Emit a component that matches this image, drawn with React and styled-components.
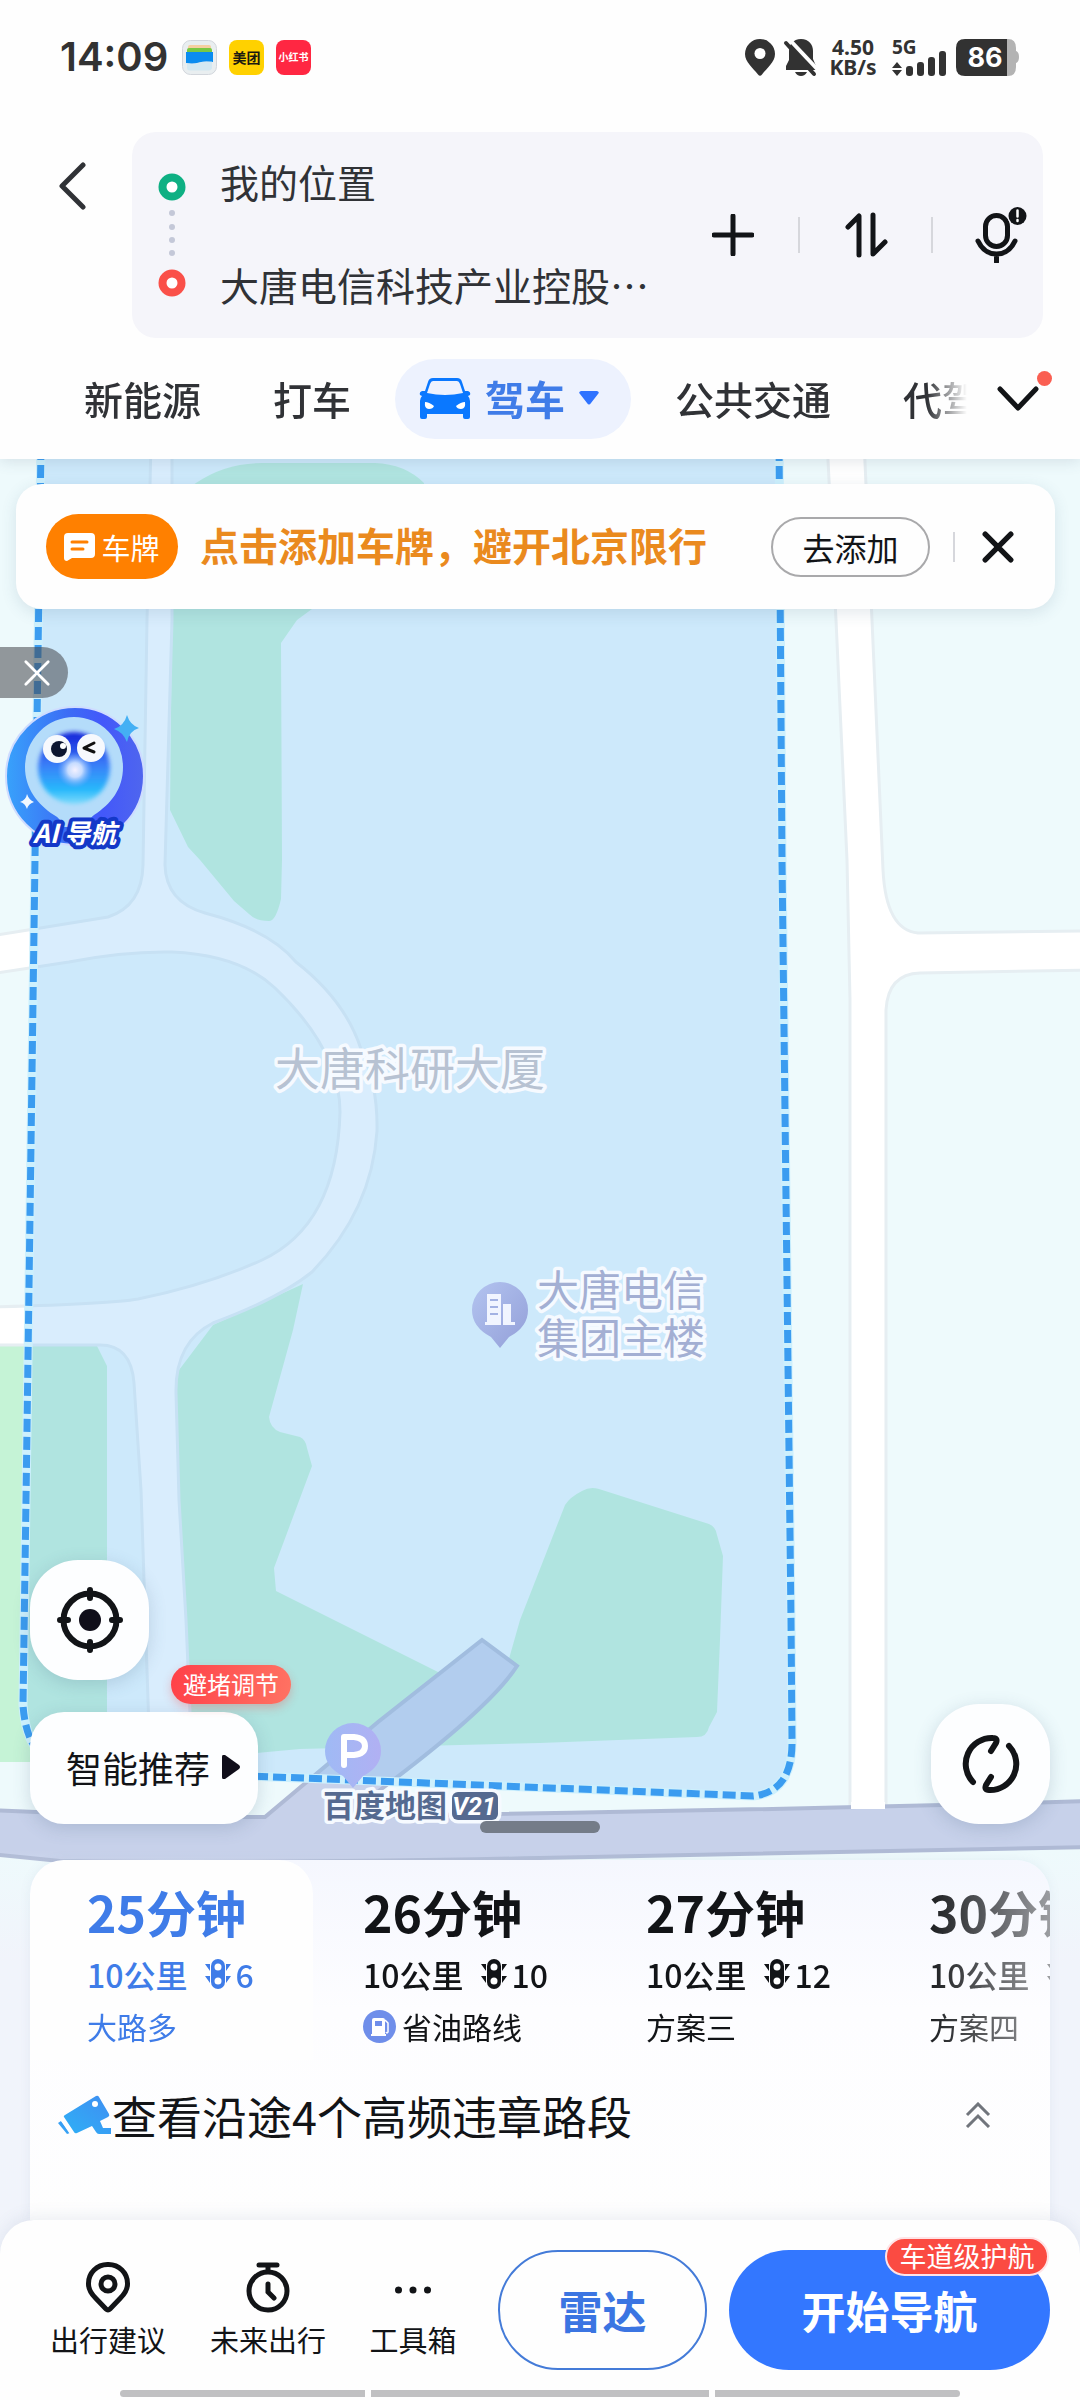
import React from "react";
import styled, { createGlobalStyle, css } from "styled-components";

const colors = {
  ink: "#121417",
  text: "#303236",
  blue: "#3377ff",
  blueText: "#3f7ce8",
  orange: "#ff8000",
  red: "#fb4b42",
  field: "#f5f5fa",
};

const GlobalStyle = createGlobalStyle`
  * {
    box-sizing: border-box;
  }

  body {
    margin: 0;
    background-color: #f1f4fb;
    font-family: "Noto Sans CJK SC", sans-serif;
    color: ${colors.ink};
  }

  button,
  input {
    font-family: inherit;
    color: inherit;
    margin: 0;
    padding: 0;
    border: none;
    background: none;
  }

  button {
    cursor: pointer;
    white-space: nowrap;
  }

  svg {
    display: block;
    flex: none;
  }
`;

const Page = styled.div`
  display: flex;
  flex-direction: column;
  min-height: 100vh;
  overflow: hidden;
`;

/* ---------- header ---------- */

const Header = styled.header`
  position: relative;
  z-index: 1;
  background-color: #fefefe;
  box-shadow: 0 2px 14px rgba(70, 90, 110, 0.16);
`;

const StatusBar = styled.div`
  display: flex;
  align-items: center;
  height: 114px;
  padding: 0 60px;
  color: #323232;
`;

const Clock = styled.div`
  width: 106px;
  margin-right: 16px;
  font-family: Inter, "Noto Sans", sans-serif;
  font-size: 40px;
  font-weight: 600;
  line-height: 48px;
  white-space: nowrap;
`;

const AppIcons = styled.div`
  display: flex;
  gap: 12px;
`;

const AppIcon = styled.div`
  display: flex;
  align-items: center;
  justify-content: center;
  width: 35px;
  height: 35px;
  border-radius: 8px;
  background-color: ${(props) => props.$bg};
  color: ${(props) => props.$color};
  font-size: ${(props) => props.$size}px;
  font-weight: 700;
  line-height: 1;
  white-space: nowrap;
`;

const StatusIcons = styled.div`
  display: flex;
  align-items: center;
  margin-left: auto;

  svg {
    overflow: visible;
  }
`;

const NetSpeed = styled.div`
  display: flex;
  flex-direction: column;
  width: 50px;
  margin: 0 14px 0 10px;
  font-family: "Noto Sans", sans-serif;
  font-size: 21px;
  font-weight: 700;
  line-height: 20px;
  text-align: center;
`;

const SearchRow = styled.div`
  display: grid;
  grid-template-columns: 132px 1fr;
  padding: 18px 37px 0 0;
`;

const BackButton = styled.button`
  display: flex;
  align-items: center;
  height: 108px;
  padding-left: 58px;
`;

const SearchCard = styled.div`
  display: flex;
  align-items: center;
  padding-left: 26px;
  border-radius: 24px;
  background-color: ${colors.field};
`;

const Fields = styled.div`
  display: flex;
  flex: 1;
  flex-direction: column;
  min-width: 0;
  margin-left: 34px;
`;

const Field = styled.input`
  width: 100%;
  height: 102px;
  padding-bottom: 5px;
  font-size: 39px;
  color: ${colors.text};
  outline: none;
  text-overflow: ellipsis;

  &:last-child {
    height: 104px;
  }
`;

const Actions = styled.div`
  display: flex;
  align-items: center;
`;

const Action = styled.button`
  display: flex;
  align-items: center;
  justify-content: ${(props) => (props.$last ? "flex-end" : "center")};
  width: ${(props) => (props.$last ? 110 : 131)}px;
  height: 80px;
  padding-right: ${(props) => (props.$last ? 16 : 0)}px;
`;

const Divider = styled.span`
  flex: none;
  width: 2px;
  height: ${(props) => props.$height}px;
  background-color: #d6d7dc;
`;

const TabRow = styled.div`
  display: flex;
  align-items: center;
  height: 121px;
  padding: 0 28px 0 48px;
`;

const Tabs = styled.nav`
  display: flex;
  flex: 1;
  align-items: center;
  min-width: 0;
  overflow: hidden;
  mask-image: linear-gradient(
    to right,
    #000 calc(100% - 40px),
    transparent 100%
  );
`;

const Tab = styled.button`
  display: flex;
  flex: none;
  align-items: center;
  height: 80px;
  padding: 0 36px 2px;
  font-size: 39px;
  font-weight: 500;
  color: ${colors.text};

  ${(props) =>
    props.$active &&
    css`
      gap: 14px;
      margin: 0 8px;
      padding: 0 32px 2px 24px;
      border-radius: 40px;
      background-color: #edf2fe;
      font-size: 40px;
      font-weight: 700;
      color: ${colors.blueText};
    `}
`;

const MoreTabs = styled.button`
  position: relative;
  display: flex;
  align-items: center;
  justify-content: center;
  width: 85px;
  height: 80px;
  padding-left: 16px;
`;

const RedDot = styled.span`
  position: absolute;
  top: 12px;
  right: 0;
  width: 15px;
  height: 15px;
  border-radius: 50%;
  background-color: #fa5f52;
`;

/* ---------- map ---------- */

const MapArea = styled.main`
  position: relative;
  display: flex;
  flex: 1;
  flex-direction: column;
  padding-top: 25px;
`;

const MapSvg = styled.svg`
  position: absolute;
  top: 0;
  left: 0;
  width: 100%;
  height: 100%;
`;

const Banner = styled.section`
  position: relative;
  display: flex;
  align-items: center;
  height: 125px;
  margin: 0 25px 0 16px;
  padding: 0 30px;
  border-radius: 26px;
  background-color: #fefefe;
  box-shadow: 0 4px 16px rgba(60, 90, 120, 0.14);
`;

const PlateTag = styled.span`
  display: flex;
  flex: none;
  align-items: center;
  justify-content: center;
  gap: 6px;
  width: 132px;
  height: 65px;
  border-radius: 33px;
  background-color: ${colors.orange};
  color: #fff;
  font-size: 29px;
`;

const BannerText = styled.p`
  flex: 1;
  margin: 0 0 0 22px;
  padding-bottom: 6px;
  font-size: 39px;
  font-weight: 700;
  color: #ea8a1e;
  white-space: nowrap;
`;

const AddButton = styled.button`
  width: 159px;
  height: 60px;
  margin-right: 23px;
  border: 2px solid #a9a9ab;
  border-radius: 30px;
  font-size: 32px;
  line-height: 54px;
`;

const CloseBanner = styled.button`
  display: flex;
  align-items: center;
  justify-content: flex-end;
  width: 70px;
  height: 60px;
  padding-right: 11px;
`;

const AiPanel = styled.div`
  position: relative;
  display: flex;
  flex-direction: column;
  align-items: flex-start;
  margin-top: 38px;
`;

const AiClose = styled.button`
  display: flex;
  align-items: center;
  justify-content: center;
  width: 68px;
  height: 51px;
  padding-left: 6px;
  border-radius: 0 26px 26px 0;
  background-color: rgba(70, 70, 74, 0.55);
`;

const Controls = styled.div`
  position: relative;
  display: flex;
  align-items: flex-end;
  justify-content: space-between;
  margin-top: auto;
  padding: 0 30px;
`;

const LeftControls = styled.div`
  display: flex;
  flex-direction: column;
  gap: 32px;
`;

const floating = css`
  display: flex;
  align-items: center;
  justify-content: center;
  background-color: #fdfeff;
  box-shadow: 0 4px 18px rgba(60, 90, 120, 0.2);
`;

const RoundButton = styled.button`
  ${floating}
  width: 119px;
  height: 120px;
  border-radius: 48px;
`;

const SmartButton = styled.button`
  ${floating}
  position: relative;
  gap: 12px;
  width: 228px;
  height: 112px;
  padding: 0 0 2px 18px;
  border-radius: 34px;
  font-size: 36px;
`;

const JamBadge = styled.span`
  position: absolute;
  top: -47px;
  left: 141px;
  width: 120px;
  height: 39px;
  border-radius: 20px;
  background: linear-gradient(100deg, #ff4048, #ff7363);
  box-shadow: 0 4px 10px rgba(240, 70, 70, 0.3);
  color: #fff;
  font-size: 24px;
  line-height: 38px;
  text-align: center;
`;

/* ---------- route sheet ---------- */

const Sheet = styled.section`
  position: relative;
  height: 360px;
  margin: 36px 30px 0;
  border-radius: 34px 34px 0 0;
  background: linear-gradient(#f5f7fe, #fdfdff 150px, #fefefe);
  box-shadow: 0 0 12px rgba(90, 110, 150, 0.08);
`;

const Handle = styled.span`
  position: absolute;
  top: -39px;
  left: 50%;
  width: 120px;
  height: 12px;
  margin-left: -60px;
  border-radius: 6px;
  background-color: #747c88;
`;

const Routes = styled.div`
  display: flex;
  overflow: hidden;
  border-radius: 34px 34px 0 0;
  mask-image: linear-gradient(
    to right,
    #000 calc(100% - 130px),
    rgba(0, 0, 0, 0.4) 100%
  );
`;

const Route = styled.button`
  display: flex;
  flex: none;
  flex-direction: column;
  width: 283px;
  height: 200px;
  padding: 18px 0 0 50px;
  text-align: left;

  ${(props) =>
    props.$active &&
    css`
      padding-left: 57px;
      border-radius: 34px 34px 0 0;
      background-color: #fefefe;
      color: ${colors.blueText};
    `}
`;

const RouteTime = styled.span`
  font-size: 50px;
  font-weight: 700;
  line-height: 66px;
`;

const RouteInfo = styled.span`
  display: flex;
  align-items: center;
  margin-top: 8px;
  font-size: 32px;
  font-weight: 500;
  line-height: 44px;

  svg {
    margin: 0 4px 0 18px;
  }
`;

const RouteNote = styled.span`
  display: flex;
  align-items: center;
  gap: 6px;
  margin-top: 10px;
  font-size: 30px;
  line-height: 40px;
`;

const Violations = styled.button`
  display: flex;
  align-items: center;
  width: 100%;
  height: 110px;
  padding: 0 59px 0 28px;
  font-size: 45px;

  svg:last-child {
    margin-left: auto;
  }
`;

/* ---------- bottom bar ---------- */

const BottomBar = styled.footer`
  position: relative;
  padding: 30px 30px 3px;
  border-radius: 34px 34px 0 0;
  background-color: #fefefe;
  box-shadow: 0 -4px 16px rgba(90, 110, 150, 0.1);
`;

const BarRow = styled.div`
  display: flex;
  height: 120px;
`;

const Tools = styled.div`
  display: flex;
  flex: 1;
`;

const Tool = styled.button`
  display: flex;
  flex-direction: column;
  align-items: center;
  width: ${(props) => props.$width}px;
  padding-top: 10px;
  font-size: 29px;
  line-height: 46px;
`;

const RadarButton = styled.button`
  width: 209px;
  margin-right: 22px;
  border: 2px solid #447bd8;
  border-radius: 60px;
  color: #3b75e2;
  font-size: 44px;
  font-weight: 700;
`;

const StartButton = styled.button`
  position: relative;
  width: 321px;
  border-radius: 60px;
  background-color: ${colors.blue};
  color: #fff;
  font-size: 44px;
  font-weight: 700;
`;

const LaneBadge = styled.span`
  position: absolute;
  top: -13px;
  right: 1px;
  width: 164px;
  height: 39px;
  border: 2px solid #ffe3e6;
  border-radius: 20px;
  background-color: ${colors.red};
  font-size: 27px;
  font-weight: 400;
  line-height: 33px;
  text-align: center;
`;

const HomeBar = styled.div`
  display: grid;
  grid-template-columns: 245fr 338fr 245fr;
  gap: 6px;
  margin: 20px 90px 0;

  span {
    height: 7px;
    background-color: #c0c0c2;
  }

  span:first-child {
    border-radius: 4px 0 0 4px;
  }

  span:last-child {
    border-radius: 0 4px 4px 0;
  }
`;

/* ---------- drawings ---------- */

const WalletLogo = () => (
  <svg width="35" height="35" viewBox="0 0 35 35">
    <rect x="0.5" y="0.5" width="34" height="34" rx="8" fill="#e9eef0" stroke="#d2d6dc" />
    <path d="M6 7q0-2 2-2h19q2 0 2 2v5H6z" fill="#f6cfa0" />
    <path d="M5 10q0-2 2-2h21q2 0 2 2v5H5z" fill="#78c843" />
    <path d="M4 12h27v10q-9-1-14 0.500t-13 0.500z" fill="#0a8cf0" />
    <path d="M5 24q8 0 13-1.500t12-1v7q-1 2-3 2H8q-3 0-3-3z" fill="#c9e6f2" opacity="0.7" />
  </svg>
);

const LocationOn = () => (
  <svg width="30" height="37" viewBox="0 0 30 37">
    <path
      d="M15 0a15 15 0 0 1 15 15c0 8-8 14-13 20.500q-2 2.500-4 0C8 29 0 23 0 15A15 15 0 0 1 15 0z"
      fill="currentColor"
    />
    <circle cx="15" cy="14.500" r="5.500" fill="#fff" />
  </svg>
);

const Muted = () => (
  <svg width="43" height="37" viewBox="-9 0 43 37">
    <path
      d="M17 0c8 0 12 6 12 12v8l3 7v4H2v-4l3-6v-9C5 6 9 0 17 0z"
      fill="currentColor"
    />
    <path d="M11 33h12q-2 4-6 4t-6-4z" fill="currentColor" />
    <path d="M4 -1L35 32" stroke="#fefefe" strokeWidth="4" />
    <path d="M2 4L30 35" stroke="currentColor" strokeWidth="4" strokeLinecap="round" />
  </svg>
);

const Signal = () => (
  <svg width="56" height="37" viewBox="0 0 56 37" fill="currentColor">
    <text x="0" y="15" fontSize="19" fontWeight="700" fontFamily="Noto Sans, sans-serif">
      5G
    </text>
    <path d="M5 23l5 6H0zM5 37l5-6H0z" />
    <rect x="14" y="27" width="7" height="10" rx="3" />
    <rect x="25" y="23" width="7" height="14" rx="3" />
    <rect x="36" y="18" width="7" height="19" rx="3" />
    <rect x="47" y="12" width="7" height="25" rx="3" />
  </svg>
);

const Battery = () => (
  <svg width="72" height="37" viewBox="-8 0 72 37">
    <path d="M48 0h4q8 0 8 9v3q3 1 3 6t-3 6v4q0 9-8 9h-4z" fill="#b3b3b3" />
    <path d="M9 0h42v37H9q-9 0-9-9V9q0-9 9-9z" fill="#323232" />
    <text
      x="29"
      y="28"
      fontSize="27"
      fontWeight="700"
      fontFamily="Inter, Noto Sans, sans-serif"
      textAnchor="middle"
      fill="#fff"
    >
      86
    </text>
  </svg>
);

const Back = () => (
  <svg width="28" height="48" viewBox="0 0 28 48">
    <path
      d="M25 3L4 24l21 21"
      fill="none"
      stroke={colors.text}
      strokeWidth="5"
      strokeLinecap="round"
      strokeLinejoin="round"
    />
  </svg>
);

const RouteMarks = () => (
  <svg width="28" height="124" viewBox="0 0 28 124">
    <circle cx="14" cy="14" r="9.500" fill="#fff" stroke="#0eb083" strokeWidth="8" />
    <g fill="#c4c8d8">
      <circle cx="14" cy="40" r="3" />
      <circle cx="14" cy="54" r="3" />
      <circle cx="14" cy="67" r="3" />
      <circle cx="14" cy="80" r="3" />
    </g>
    <circle cx="14" cy="110" r="9.500" fill="#fff" stroke="#fa5049" strokeWidth="8" />
  </svg>
);

const Plus = () => (
  <svg width="42" height="42" viewBox="0 0 42 42">
    <path d="M21 2v38M2 21h38" stroke={colors.ink} strokeWidth="5" strokeLinecap="round" />
  </svg>
);

const Swap = () => (
  <svg width="44" height="46" viewBox="0 0 44 46">
    <path
      d="M4 15L15 4v39M29 3v39l12-12"
      fill="none"
      stroke={colors.ink}
      strokeWidth="5"
      strokeLinecap="round"
      strokeLinejoin="round"
    />
  </svg>
);

const Mic = () => (
  <svg width="52" height="56" viewBox="0 0 52 56">
    <rect
      x="10.500"
      y="8.500"
      width="22"
      height="31"
      rx="11"
      fill="none"
      stroke={colors.ink}
      strokeWidth="5"
    />
    <path
      d="M3 34q6 13 18.500 13T40 34M21.500 47v8"
      fill="none"
      stroke={colors.ink}
      strokeWidth="5"
      strokeLinecap="round"
    />
    <circle cx="42.500" cy="9" r="10" fill={colors.field} />
    <circle cx="42.500" cy="9" r="9" fill={colors.ink} />
    <path d="M42.500 3.500v6M42.500 13v1" stroke="#fff" strokeWidth="2.500" strokeLinecap="round" />
  </svg>
);

const Car = () => (
  <svg width="52" height="42" viewBox="0 0 52 42">
    <path
      d="M14 1h24q4 0 5 4l3 9h3q3 1 2 4l-2 1q2 2 2 5v16q0 2-2 2h-3q-2 0-2-2v-3H8v3q0 2-2 2H3q-2 0-2-2V24q0-3 2-5l-2-1q-1-3 2-4h3l3-9q1-4 5-4z"
      fill="#0a78ff"
    />
    <path d="M14 4h24q2 0 3 3l3 9q-18 4-36 0l3-9q1-3 3-3z" fill="#edf2fe" />
    <path d="M6 25q4 0 9 4-1 3-5 3-5 0-4-7zM46 25q-4 0-9 4 1 3 5 3 5 0 4-7z" fill="#fff" />
  </svg>
);

const CaretDown = () => (
  <svg width="20" height="14" viewBox="0 0 20 14">
    <path d="M2 0h16q3 1 1 3l-7 9q-2 3-4 0L1 3q-2-2 1-3z" fill="#2f73ff" />
  </svg>
);

const ChevronDown = () => (
  <svg width="42" height="26" viewBox="0 0 42 26">
    <path
      d="M3 3l18 19L39 3"
      fill="none"
      stroke={colors.ink}
      strokeWidth="5"
      strokeLinecap="round"
      strokeLinejoin="round"
    />
  </svg>
);

const PlateIcon = () => (
  <svg width="31" height="28" viewBox="0 0 31 28">
    <path d="M4 0h23q4 0 4 4v17q0 4-4 4H8l-5 3q-3 0-3-3V4q0-4 4-4z" fill="#fff" />
    <path d="M8 9h15M8 16h11" stroke={colors.orange} strokeWidth="3" strokeLinecap="round" />
  </svg>
);

const Cross = ({ size, color, width }) => (
  <svg width={size} height={size} viewBox="0 0 30 30">
    <path
      d="M3 3l24 24M27 3L3 27"
      stroke={color}
      strokeWidth={width}
      strokeLinecap="round"
    />
  </svg>
);

const AiLogo = () => (
  <svg width="150" height="156" viewBox="0 0 150 156">
    <defs>
      <linearGradient id="aiRing" x1="0" y1="0.500" x2="1" y2="0.500">
        <stop offset="0" stopColor="#38a2fb" />
        <stop offset="0.450" stopColor="#3c6cf5" />
        <stop offset="0.700" stopColor="#4358fa" />
        <stop offset="1" stopColor="#4f66ee" />
      </linearGradient>
      <linearGradient id="aiFace" x1="0.500" y1="0" x2="0.500" y2="1">
        <stop offset="0" stopColor="#1420d8" />
        <stop offset="0.450" stopColor="#3b7df8" />
        <stop offset="0.800" stopColor="#27b8fb" />
        <stop offset="1" stopColor="#7fdcfb" />
      </linearGradient>
      <radialGradient id="aiNose">
        <stop offset="0" stopColor="#f4f1ff" />
        <stop offset="0.400" stopColor="#c6dcff" />
        <stop offset="1" stopColor="#6fa8ff" stopOpacity="0" />
      </radialGradient>
      <filter id="aiSoft" x="-20%" y="-20%" width="140%" height="140%">
        <feGaussianBlur stdDeviation="2" />
      </filter>
    </defs>
    <circle cx="75" cy="78" r="69" fill="url(#aiRing)" stroke="#cfdcff" strokeWidth="2" />
    <path
      d="M74 19a49 50 0 0 1 49 50c0 22-12 37-29 48q-6 4-3 12H62q0-8-8-12C37 106 25 90 25 69A49 50 0 0 1 74 19z"
      fill="#b4dcfa"
    />
    <circle cx="74" cy="70" r="36" fill="url(#aiFace)" filter="url(#aiSoft)" />
    <circle cx="75" cy="72" r="18" fill="url(#aiNose)" />
    <circle cx="57" cy="51" r="14" fill="#f7f9fd" />
    <circle cx="91" cy="50" r="14" fill="#f7f9fd" />
    <circle cx="59" cy="51" r="8" fill="#0c1530" />
    <circle cx="63" cy="48" r="3" fill="#fff" />
    <path
      d="M94 45l-10 5 10 4"
      fill="none"
      stroke="#111"
      strokeWidth="3"
      strokeLinecap="round"
      strokeLinejoin="round"
    />
    <path d="M127 17q3 10 12 13-10 3-12 14-4-10-13-13 10-3 13-14z" fill="#44b0f4" />
    <path d="M27 96q2 6 7 8-6 2-7 7-2-6-7-7 6-2 7-8z" fill="#f0f8ff" />
    <text
      x="33"
      y="145"
      fontSize="26"
      fontWeight="700"
      fontStyle="italic"
      fill="#fff"
      stroke="#1438c8"
      strokeWidth="8"
      strokeLinejoin="round"
      paintOrder="stroke"
    >
      AI 导航
    </text>
  </svg>
);

const Locate = () => (
  <svg width="66" height="66" viewBox="0 0 66 66">
    <g fill="none" stroke={colors.ink} strokeLinecap="round">
      <circle cx="33" cy="33" r="26.500" strokeWidth="6" />
      <path d="M33 3v8M33 55v8M3 33h8M55 33h8" strokeWidth="6" />
    </g>
    <circle cx="33" cy="33" r="11" fill="#100e1a" />
  </svg>
);

const Refresh = () => (
  <svg width="60" height="60" viewBox="0 0 60 60">
    <path
      d="M12 48A26 26 0 0 1 32 4q5 0 3 5l-5 8M48 12A26 26 0 0 1 28 56q-5 0-3-5l5-8"
      fill="none"
      stroke={colors.ink}
      strokeWidth="6"
      strokeLinecap="round"
      strokeLinejoin="round"
    />
  </svg>
);

const CaretRight = () => (
  <svg width="18" height="24" viewBox="0 0 18 24">
    <path d="M0 2q0-3 3-2l14 10q2 2 0 4L3 24q-3 1-3-2z" fill="#100e1a" />
  </svg>
);

const TrafficLight = () => (
  <svg width="26" height="30" viewBox="0 0 26 30">
    <g fill="currentColor">
      <rect x="6" y="0" width="14" height="30" rx="7" />
      <path d="M0 5h5v7zM0 17h5v7zM26 5h-5v7zM26 17h-5v7z" />
    </g>
    <g fill="#fff">
      <circle cx="13" cy="8" r="3.500" />
      <circle cx="13" cy="22" r="3.500" />
    </g>
  </svg>
);

const Fuel = () => (
  <svg width="33" height="33" viewBox="0 0 33 33">
    <circle cx="16.500" cy="16.500" r="16.500" fill="#6f8eea" />
    <path d="M11 8h9q2 0 2 2v14h1v2H8v-2h1V10q0-2 2-2z" fill="#fff" />
    <rect x="12" y="11" width="7" height="5" fill="#6f8eea" />
    <path d="M22 10l3 3v9q-1 2-2 0" fill="none" stroke="#fff" strokeWidth="1.500" />
  </svg>
);

const Camera = () => (
  <svg width="54" height="42" viewBox="0 0 54 42">
    <defs>
      <linearGradient id="cam" x1="0" y1="1" x2="1" y2="0">
        <stop offset="0" stopColor="#2fb0f6" />
        <stop offset="1" stopColor="#3f8ef2" />
      </linearGradient>
    </defs>
    <g fill="url(#cam)">
      <path d="M7 21L38 2q2-1 3 1l10 17q1 2-1 3l-8 4 3 7h8v6H41q-2 0-3-2l-4-6-15 7q-2 1-3-1L6 23q-1-1 1-2z" />
      <path d="M0 29l3-2 9 12-3 1z" />
    </g>
    <path d="M3 25l10 15" stroke="#fefefe" strokeWidth="2" />
    <circle cx="37" cy="10" r="3" fill="#fff" />
  </svg>
);

const DoubleUp = () => (
  <svg width="26" height="26" viewBox="0 0 26 26">
    <path
      d="M2 13L13 2l11 11M2 25l11-11 11 11"
      fill="none"
      stroke="#71757c"
      strokeWidth="3"
    />
  </svg>
);

const PinOutline = () => (
  <svg width="46" height="56" viewBox="0 0 46 56">
    <g fill="none" stroke={colors.ink} strokeWidth="5">
      <path d="M23 4.500a19 19 0 0 1 19.500 19.500c0 6-3 10-7 14L25 49q-2 2-4 0L10.500 38c-4-4-7-8-7-14A19 19 0 0 1 23 4.500z" />
      <circle cx="23" cy="24" r="7" />
    </g>
  </svg>
);

const Stopwatch = () => (
  <svg width="46" height="56" viewBox="0 0 46 56">
    <g fill="none" stroke={colors.ink} strokeWidth="5" strokeLinecap="round">
      <circle cx="23" cy="31" r="19" />
      <path d="M14 5h18M23 5v6" />
      <path d="M23 24v8l6 6" />
    </g>
  </svg>
);

const Dots = () => (
  <svg width="46" height="56" viewBox="0 0 46 56" fill={colors.ink}>
    <circle cx="8.500" cy="30" r="3.500" />
    <circle cx="23" cy="30" r="3.500" />
    <circle cx="37.500" cy="30" r="3.500" />
  </svg>
);

// Drawn on a 1080 wide sheet, cropped when the window has another ratio.
const CityMap = () => (
  <MapSvg viewBox="0 459 1080 1941" preserveAspectRatio="xMidYMin slice" aria-hidden="true">
    <defs>
      <linearGradient id="mapFade" x1="0" y1="0" x2="0" y2="1">
        <stop offset="0" stopColor="#f1f4fb" stopOpacity="0" />
        <stop offset="1" stopColor="#f1f4fb" />
      </linearGradient>
      <linearGradient id="poi" x1="0" y1="0" x2="1" y2="1">
        <stop offset="0" stopColor="#b3c4f0" />
        <stop offset="1" stopColor="#939fd8" />
      </linearGradient>
      <linearGradient id="park" x1="0" y1="0" x2="1" y2="0">
        <stop offset="0" stopColor="#9fbaf5" />
        <stop offset="1" stopColor="#b1b0f3" />
      </linearGradient>
    </defs>
    <rect y="459" width="1080" height="1941" fill="#eefafc" />

    <g fill="#c5f3d6">
      <path d="M172 620V500L196 483Q225 463 262 463H375Q405 464 424 483V560L312 609L297 620L281 643L282 860L281 899Q276 921 269 921Q256 921 249 914L234 901L200 860L188 847L170 810z" />
      <path d="M0 1346H97L107 1366V1762H0z" />
      <path d="M303 1284L293 1330L269 1417Q270 1428 280 1432L300 1437Q306 1440 307 1448L312 1466L274 1568L276 1591L444 1675L503 1680L520 1620L565 1505Q570 1497 582 1491Q590 1486 599 1489L709 1524Q716 1527 717 1535L723 1556L720 1640L717 1712L709 1727Q707 1737 697 1737L540 1743L300 1749L180 1760L176 1374L213 1325z" />
    </g>

    <g fill="#fff" stroke="#e6eef2" strokeWidth="3">
      <path d="M827 440L836 620L847 860L850 1000V1808H886V1010Q888 974 920 973L1090 970V931L918 933Q886 930 883 870L872 620L864 440z" />
      <path
        fillRule="evenodd"
        d="M151 440L147 620L143 865Q142 906 108 917L28 930L-10 936V974L69 962Q125 951 172 952Q240 955 275 988Q340 1050 340 1112Q337 1225 262 1260Q207 1285 138 1299Q110 1304 -10 1307V1345H100Q131 1345 134 1383L141 1490L150 1760H192L186 1620L179 1500L176 1393Q175 1342 213 1323Q280 1298 312 1272Q372 1210 377 1131Q378 1085 361 1049Q345 1000 296 962Q270 930 205 913Q166 902 165 865L172 620V440z"
      />
    </g>

    <path
      d="M-10 1810Q150 1817 265 1817L378 1722L482 1640L517 1666Q490 1708 380 1790L350 1816Q700 1812 1090 1801V1847L540 1858Q250 1864 60 1861L-10 1854z"
      fill="#c7d1ea"
      stroke="#afbad5"
      strokeWidth="4"
    />
    <path d="M851 1802h34v7h-34z" fill="#fff" />

    <path
      d="M41 440L35 860L26 1500L23 1705Q27 1766 75 1769L753 1796Q793 1792 792 1740L791 1620L782 860L779 440"
      fill="rgba(130, 197, 250, 0.3)"
    />
    <path
      d="M41 440L35 860L26 1500L23 1705Q27 1766 75 1769L753 1796Q793 1792 792 1740L791 1620L782 860L779 440"
      fill="none"
      stroke="#cdf0fd"
      strokeWidth="9"
    />
    <path
      d="M41 447L35 860L26 1500L23 1705Q27 1766 75 1769L753 1796Q793 1792 792 1740L791 1620L782 860L779 440"
      fill="none"
      stroke="#3b9cf0"
      strokeWidth="7"
      strokeDasharray="13 5"
    />

    <path
      d="M500 1282a28 28 0 0 1 28 28q0 17-19 27l-9 11-9-11q-19-10-19-27a28 28 0 0 1 28-28z"
      fill="url(#poi)"
    />
    <path d="M487 1294h14v31h-16v-3h2zM503 1304h8v18h4v3h-12z" fill="#f1f5ff" />
    <path d="M490 1300h8M490 1307h8M490 1314h8" stroke="#a3b2e3" strokeWidth="2" />

    <path
      d="M353 1723a28 28 0 0 1 28 28q0 16-18 25l-10 12-10-12q-18-9-18-25a28 28 0 0 1 28-28z"
      fill="url(#park)"
    />
    <path
      d="M344 1765V1737H354Q365 1738 365 1746T354 1755H346"
      fill="none"
      stroke="#fff"
      strokeWidth="6"
      strokeLinecap="round"
      strokeLinejoin="round"
    />

    <g stroke="#f6faff" strokeWidth="7" strokeLinejoin="round" paintOrder="stroke">
      <text x="275" y="1086" fontSize="45" fill="#b7c2d2">
        大唐科研大厦
      </text>
      <g fontSize="42" fill="#a3afd3">
        <text x="537" y="1306">
          大唐电信
        </text>
        <text x="537" y="1354">
          集团主楼
        </text>
      </g>
      <text x="323" y="1817" fontSize="31" fontWeight="700" fill="#556a90">
        百度地图
      </text>
      <rect x="452" y="1792" width="46" height="28" rx="6" fill="#556a90" />
    </g>
    <text
      x="474"
      y="1815"
      fontSize="25"
      fontWeight="700"
      fontStyle="italic"
      fontFamily="Roboto, sans-serif"
      textAnchor="middle"
      fill="#fff"
    >
      V21
    </text>

    <rect y="1850" width="1080" height="110" fill="url(#mapFade)" />
    <rect y="1960" width="1080" height="440" fill="#f1f4fb" />
  </MapSvg>
);

const routes = [
  { time: "25分钟", lights: 6, note: "大路多", active: true },
  { time: "26分钟", lights: 10, note: "省油路线", fuel: true },
  { time: "27分钟", lights: 12, note: "方案三" },
  { time: "30分钟", lights: 12, note: "方案四" },
];

const tools = [
  { label: "出行建议", icon: <PinOutline />, width: 156 },
  { label: "未来出行", icon: <Stopwatch />, width: 164 },
  { label: "工具箱", icon: <Dots />, width: 126 },
];

function App() {
  return (
    <Page>
      <GlobalStyle />
      <Header>
        <StatusBar>
          <Clock>14:09</Clock>
          <AppIcons>
            <WalletLogo />
            <AppIcon $bg="#ffd100" $color="#1c1a10" $size={14}>
              美团
            </AppIcon>
            <AppIcon $bg="#ff2742" $color="#fff" $size={10}>
              小红书
            </AppIcon>
          </AppIcons>
          <StatusIcons>
            <LocationOn />
            <Muted />
            <NetSpeed>
              <span>4.50</span>
              <span>KB/s</span>
            </NetSpeed>
            <Signal />
            <Battery />
          </StatusIcons>
        </StatusBar>

        <SearchRow>
          <BackButton aria-label="返回">
            <Back />
          </BackButton>
          <SearchCard>
            <RouteMarks />
            <Fields>
              <Field aria-label="起点" defaultValue="我的位置" />
              <Field aria-label="终点" defaultValue="大唐电信科技产业控股…" />
            </Fields>
            <Actions>
              <Action aria-label="添加途经点">
                <Plus />
              </Action>
              <Divider $height={36} />
              <Action aria-label="交换起终点">
                <Swap />
              </Action>
              <Divider $height={36} />
              <Action aria-label="语音输入" $last>
                <Mic />
              </Action>
            </Actions>
          </SearchCard>
        </SearchRow>

        <TabRow>
          <Tabs>
            <Tab>新能源</Tab>
            <Tab>打车</Tab>
            <Tab $active>
              <Car />
              驾车
              <CaretDown />
            </Tab>
            <Tab>公共交通</Tab>
            <Tab>代驾</Tab>
          </Tabs>
          <MoreTabs aria-label="更多出行方式">
            <ChevronDown />
            <RedDot />
          </MoreTabs>
        </TabRow>
      </Header>

      <MapArea>
        <CityMap />

        <Banner>
          <PlateTag>
            <PlateIcon />
            车牌
          </PlateTag>
          <BannerText>点击添加车牌，避开北京限行</BannerText>
          <AddButton>去添加</AddButton>
          <Divider $height={30} />
          <CloseBanner aria-label="关闭">
            <Cross size={32} color={colors.ink} width={5} />
          </CloseBanner>
        </Banner>

        <AiPanel>
          <AiClose aria-label="关闭">
            <Cross size={28} color="#fff" width={3} />
          </AiClose>
          <button aria-label="AI导航">
            <AiLogo />
          </button>
        </AiPanel>

        <Controls>
          <LeftControls>
            <RoundButton aria-label="定位">
              <Locate />
            </RoundButton>
            <SmartButton>
              智能推荐
              <CaretRight />
              <JamBadge>避堵调节</JamBadge>
            </SmartButton>
          </LeftControls>
          <RoundButton aria-label="刷新">
            <Refresh />
          </RoundButton>
        </Controls>

        <Sheet>
          <Handle />
          <Routes>
            {routes.map((route) => (
              <Route key={route.time} $active={route.active}>
                <RouteTime>{route.time}</RouteTime>
                <RouteInfo>
                  10公里
                  <TrafficLight />
                  {route.lights}
                </RouteInfo>
                <RouteNote>
                  {route.fuel && <Fuel />}
                  {route.note}
                </RouteNote>
              </Route>
            ))}
          </Routes>
          <Violations>
            <Camera />
            查看沿途4个高频违章路段
            <DoubleUp />
          </Violations>
        </Sheet>

        <BottomBar>
          <BarRow>
            <Tools>
              {tools.map((tool) => (
                <Tool key={tool.label} $width={tool.width}>
                  {tool.icon}
                  {tool.label}
                </Tool>
              ))}
            </Tools>
            <RadarButton>雷达</RadarButton>
            <StartButton>
              开始导航
              <LaneBadge>车道级护航</LaneBadge>
            </StartButton>
          </BarRow>
          <HomeBar>
            <span />
            <span />
            <span />
          </HomeBar>
        </BottomBar>
      </MapArea>
    </Page>
  );
}

export default App;
